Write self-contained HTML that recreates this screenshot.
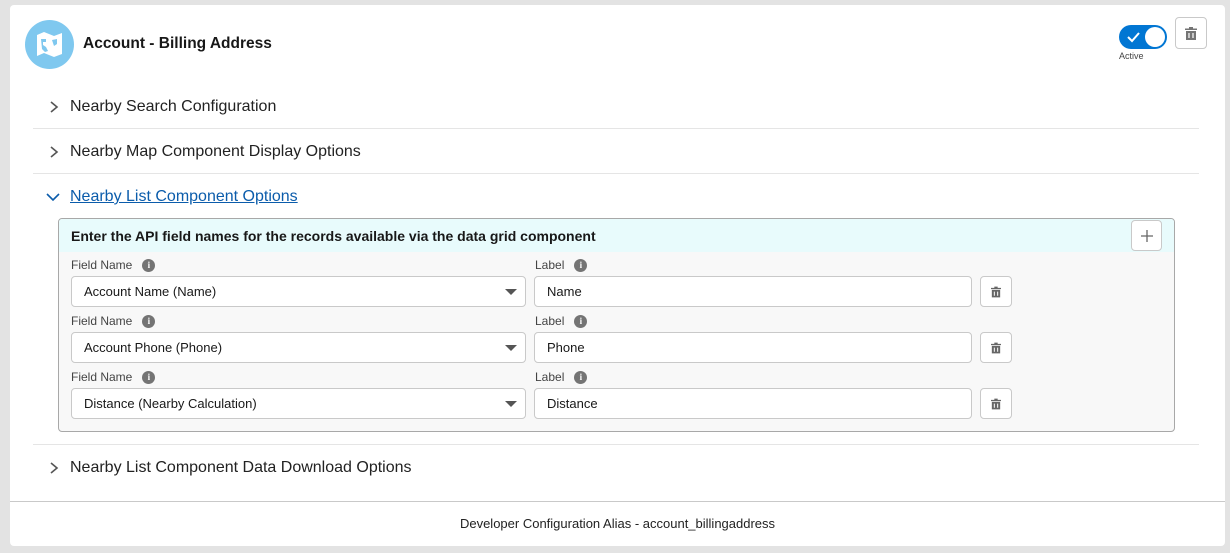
<!DOCTYPE html><html><head><style>
*{box-sizing:border-box;margin:0;padding:0}
body{width:1230px;height:553px;background:#e3e3e3;font-family:"Liberation Sans",sans-serif;position:relative;overflow:hidden;color:#181818}
.a{position:absolute}
.card{left:10px;top:5px;width:1215px;height:541px;background:#fff;border-radius:4px}
.sec{left:48px;font-size:16px;color:#222;display:flex;align-items:center}
.sec svg{margin-right:10px}
.hr{left:33px;width:1166px;height:1px;background:#e5e5e5}
.lbl{font-size:12px;color:#444;display:flex;align-items:center}
.info{display:inline-block;width:13px;height:13px;border-radius:50%;background:#747474;color:#fff;font-size:9px;font-weight:bold;text-align:center;line-height:13px;margin-left:10px;font-family:"Liberation Serif",serif}
.inp{height:31px;border:1px solid #c9c9c9;border-radius:4px;background:#fff;font-size:13px;padding-left:12px;line-height:29px;color:#181818}
.btn{width:32px;height:31px;border:1px solid #c9c9c9;border-radius:4px;background:#fff;display:flex;align-items:center;justify-content:center}
</style></head><body>
<div class="a card"></div>
<div class="a" style="left:25px;top:20px;width:49px;height:49px;border-radius:50%;background:#7fc8ef"></div>
<svg class="a" style="left:35px;top:31px" width="29" height="27" viewBox="0 0 29 27"><path d="M2 4 L9 1 L19 5 L27 2 L27 23 L19 26 L9 22 L2 25Z" fill="#fff"/><path d="M6 8 h5 v3 h-3 v3 l3 2 l2 4 l-3 1 l-3-3z M17 9 l5-1 v5 l-3 2 z" fill="#7fc8ef"/></svg>
<div class="a" style="left:83px;top:35px;font-size:15.5px;font-weight:bold">Account - Billing Address</div>
<div class="a" style="left:1119px;top:25px;width:48px;height:24px;border-radius:12px;background:#0176d3"></div>
<div class="a" style="left:1145px;top:27px;width:20px;height:20px;border-radius:50%;background:#fff"></div>
<svg class="a" style="left:1126px;top:31px" width="14" height="12" viewBox="0 0 14 12"><path d="M2 6 L6 10 L13 2" stroke="#fff" stroke-width="2" fill="none"/></svg>
<div class="a" style="left:1119px;top:51px;font-size:9px;color:#444">Active</div>
<div class="a btn" style="left:1175px;top:17px;width:32px;height:32px"><svg width="12" height="13" viewBox="0 0 12 13"><path d="M4 0h4v1.5h4v1.5H0V1.5h4z M1 4h10v9H1z" fill="#747474"/><path d="M4 6v5M8 6v5" stroke="#fff" stroke-width="1.2"/></svg></div>

<div class="a sec" style="top:98px"><svg width="12" height="14"><path d="M3 2 L9 7 L3 12" stroke="#555" stroke-width="1.6" fill="none"/></svg>Nearby Search Configuration</div>
<div class="a hr" style="top:128px"></div>
<div class="a sec" style="top:143px"><svg width="12" height="14"><path d="M3 2 L9 7 L3 12" stroke="#555" stroke-width="1.6" fill="none"/></svg>Nearby Map Component Display Options</div>
<div class="a hr" style="top:173px"></div>
<div class="a sec" style="top:188px;left:46px"><svg width="14" height="14"><path d="M1 4 L7 10 L13 4" stroke="#0b5cab" stroke-width="1.6" fill="none"/></svg><span style="color:#0b5cab;text-decoration:underline">Nearby List Component Options</span></div>

<div class="a" style="left:58px;top:218px;width:1117px;height:214px;border:1px solid #a8a8a8;border-radius:4px;background:#f8f8f8;overflow:hidden">
<div style="height:33px;background:#e8fbfc;font-size:14px;font-weight:bold;padding:9px 0 0 12px">Enter the API field names for the records available via the data grid component</div>
</div>
<div class="a btn" style="left:1131px;top:220px;width:31px"><svg width="14" height="14"><path d="M7 1v12M1 7h12" stroke="#666" stroke-width="1.3"/></svg></div>

<div class="a lbl" style="left:71px;top:258px">Field Name<span class="info">i</span></div>
<div class="a lbl" style="left:535px;top:258px">Label<span class="info">i</span></div>
<div class="a inp" style="left:71px;top:276px;width:455px">Account Name (Name)</div>
<div class="a inp" style="left:534px;top:276px;width:438px">Name</div>
<div class="a btn" style="left:980px;top:276px"><svg width="10" height="12" viewBox="0 0 12 13"><path d="M4 0h4v1.5h4v1.5H0V1.5h4z M1 4h10v9H1z" fill="#666"/><path d="M4 6v5M8 6v5" stroke="#fff" stroke-width="1.2"/></svg></div>

<div class="a lbl" style="left:71px;top:314px">Field Name<span class="info">i</span></div>
<div class="a lbl" style="left:535px;top:314px">Label<span class="info">i</span></div>
<div class="a inp" style="left:71px;top:332px;width:455px">Account Phone (Phone)</div>
<div class="a inp" style="left:534px;top:332px;width:438px">Phone</div>
<div class="a btn" style="left:980px;top:332px"><svg width="10" height="12" viewBox="0 0 12 13"><path d="M4 0h4v1.5h4v1.5H0V1.5h4z M1 4h10v9H1z" fill="#666"/><path d="M4 6v5M8 6v5" stroke="#fff" stroke-width="1.2"/></svg></div>

<div class="a lbl" style="left:71px;top:370px">Field Name<span class="info">i</span></div>
<div class="a lbl" style="left:535px;top:370px">Label<span class="info">i</span></div>
<div class="a inp" style="left:71px;top:388px;width:455px">Distance (Nearby Calculation)</div>
<div class="a inp" style="left:534px;top:388px;width:438px">Distance</div>
<div class="a btn" style="left:980px;top:388px"><svg width="10" height="12" viewBox="0 0 12 13"><path d="M4 0h4v1.5h4v1.5H0V1.5h4z M1 4h10v9H1z" fill="#666"/><path d="M4 6v5M8 6v5" stroke="#fff" stroke-width="1.2"/></svg></div>

<svg class="a" style="left:505px;top:288px" width="12" height="8"><path d="M0 1h12L6 7z" fill="#555"/></svg>
<svg class="a" style="left:505px;top:344px" width="12" height="8"><path d="M0 1h12L6 7z" fill="#555"/></svg>
<svg class="a" style="left:505px;top:400px" width="12" height="8"><path d="M0 1h12L6 7z" fill="#555"/></svg>

<div class="a hr" style="top:444px"></div>
<div class="a sec" style="top:459px"><svg width="12" height="14"><path d="M3 2 L9 7 L3 12" stroke="#555" stroke-width="1.6" fill="none"/></svg>Nearby List Component Data Download Options</div>
<div class="a" style="left:10px;top:501px;width:1215px;height:1px;background:#c9c9c9"></div>
<div class="a" style="left:10px;top:516px;width:1215px;text-align:center;font-size:13px;color:#222">Developer Configuration Alias - account_billingaddress</div>
</body></html>
